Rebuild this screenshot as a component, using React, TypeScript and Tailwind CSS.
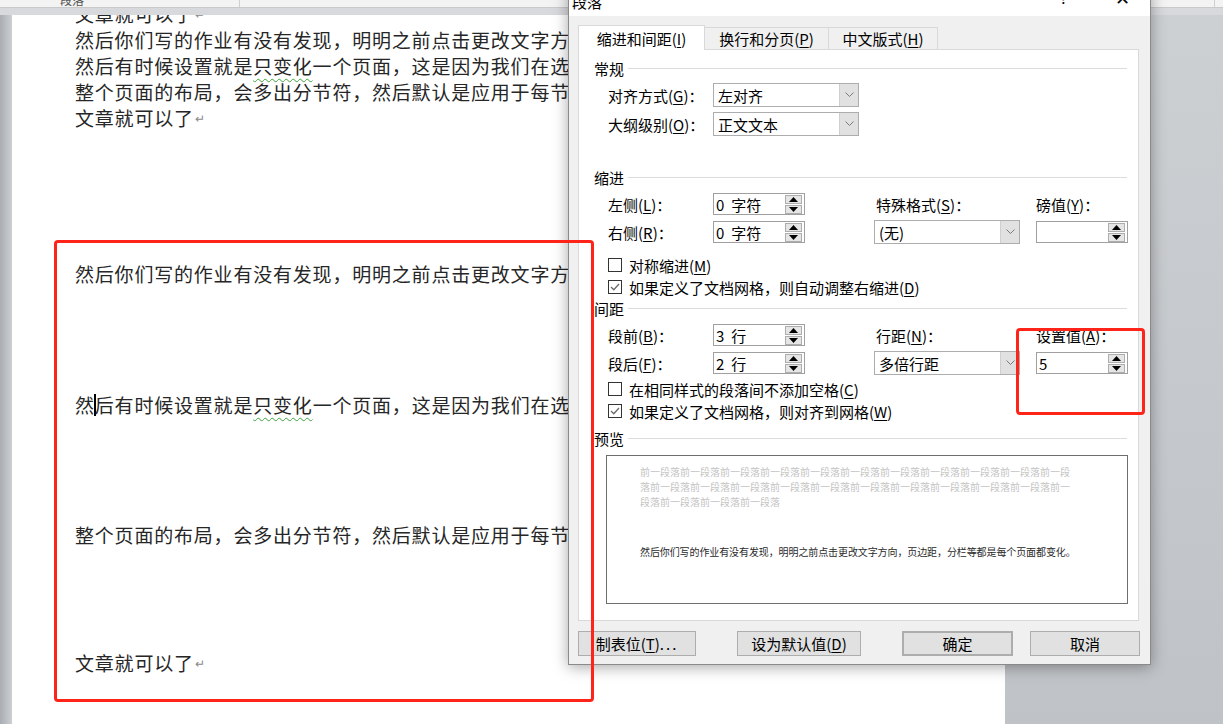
import React from "react";

const M = ({ c }: { c: string }) => (
  <>
    (<span className="underline underline-offset-[2px] decoration-[1px]">{c}</span>)
  </>
);

const Chevron = () => (
  <svg width="9" height="6" viewBox="0 0 9 6">
    <path d="M0.5 0.5 L4.5 4.5 L8.5 0.5" fill="none" stroke="#7a7a7a" strokeWidth="1" />
  </svg>
);

const Select = ({ value }: { value: string }) => (
  <div className="flex h-[24px] w-[146px] shrink-0 border border-[#adadad] bg-white">
    <div className="flex flex-1 items-center pl-[4px] text-[15px] leading-none">{value}</div>
    <div className="flex w-[19px] items-center justify-center border-l border-[#cfcfcf] bg-[#e1e1e1]">
      <Chevron />
    </div>
  </div>
);

const SpinBtn = ({ up }: { up: boolean }) => (
  <div className="flex h-[9px] w-[17px] items-center justify-center border border-[#adadad] bg-[#e5e5e5]">
    <svg width="9" height="5" viewBox="0 0 9 5">
      {up ? <path d="M0 5 L4.5 0 L9 5 Z" fill="#000" /> : <path d="M0 0 L4.5 5 L9 0 Z" fill="#000" />}
    </svg>
  </div>
);

const Spin = ({ num, unit }: { num: string; unit?: string }) => (
  <div className="flex h-[22px] w-[92px] shrink-0 items-center border border-[#a0a0a0] bg-white pl-[2px] pr-[2px]">
    <div className="flex flex-1 items-center text-[15px] leading-none">
      <span>{num}</span>
      {unit && <span className="ml-[7px]">{unit}</span>}
    </div>
    <div className="flex flex-col gap-[1px]">
      <SpinBtn up />
      <SpinBtn up={false} />
    </div>
  </div>
);

const Heading = ({ t, mt }: { t: string; mt: string }) => (
  <div className={`flex h-[20px] items-center pl-[15px] pr-[11px] ${mt}`}>
    <span className="leading-none">{t}</span>
    <div className="ml-[4px] h-px flex-1 bg-[#dcdcdc]" />
  </div>
);

const CheckRow = ({ checked, mt, children }: { checked: boolean; mt: string; children: React.ReactNode }) => (
  <div className={`flex h-[20px] items-center gap-[7px] pl-[29px] ${mt}`}>
    <div className="flex h-[14px] w-[14px] items-center justify-center border border-[#333333] bg-white">
      {checked && (
        <svg width="10" height="8" viewBox="0 0 10 8">
          <path d="M1 4 L3.8 6.8 L9 1" fill="none" stroke="#6a6a6a" strokeWidth="1.3" />
        </svg>
      )}
    </div>
    <span className="leading-none">{children}</span>
  </div>
);

const Label = ({ children }: { children: React.ReactNode }) => (
  <div className="w-[105px] shrink-0 whitespace-nowrap leading-none">{children}</div>
);

const Btn = ({ children, cls }: { children: React.ReactNode; cls: string }) => (
  <div className={`flex h-[25px] shrink-0 items-center justify-center border border-[#adadad] bg-[#e1e1e1] leading-none ${cls}`}>
    {children}
  </div>
);

const Wavy = ({ children }: { children: React.ReactNode }) => (
  <span className="underline decoration-wavy decoration-[#3aa63a] decoration-[1px] underline-offset-[4px]">{children}</span>
);

const Ret = () => <span className="ml-[1px] align-[-2px] text-[12px] text-[#8a8a8a]">↵</span>;

export default function App() {
  const docFont = "font-['Noto_Sans_CJK_SC','Noto_Sans',sans-serif]";
  return (
    <div className={`relative h-[724px] w-[1223px] overflow-hidden bg-[#c4c7cb] ${docFont}`}>
      {/* background: ribbon strip + page */}
      <div className="flex h-full flex-col">
        <div className="flex h-[8px] shrink-0 overflow-hidden border-b border-[#c9c9c9] bg-[#f3f3f3]">
          <div className="-mt-[6px] w-[240px] border-r border-[#cfcfcf] pl-[60px] text-[12px] leading-none text-[#555]">段落</div>
          <div className="flex-1" />
          <div className="w-[9px] border-l border-[#cfcfcf]" />
        </div>
        <div className="h-[7px] shrink-0 bg-[#d7d9dc]" />
        <div className="flex flex-1">
          <div className="w-[12px] shrink-0 bg-gradient-to-r from-[#a9acb1] to-[#cdd0d3]" />
          <div className="w-[993px] shrink-0 overflow-hidden bg-white pl-[63px] text-[19px] tracking-[0.8px] text-[#262626]">
            <div className="-mt-[14px] flex flex-col">
              <div className="flex h-[26px] items-center whitespace-nowrap">文章就可以了<Ret /></div>
              <div className="flex h-[26px] items-center whitespace-nowrap">然后你们写的作业有没有发现，明明之前点击更改文字方向，页边距，分栏等都是每个页面都变化。</div>
              <div className="flex h-[26px] items-center whitespace-nowrap">然后有时候设置就是<Wavy>只变化</Wavy>一个页面，这是因为我们在选择的时候选择了本节。</div>
              <div className="flex h-[26px] items-center whitespace-nowrap">整个页面的布局，会多出分节符，然后默认是应用于每节，选择整篇</div>
              <div className="flex h-[26px] items-center whitespace-nowrap">文章就可以了<Ret /></div>
              <div className="mt-[130px] flex h-[26px] items-center whitespace-nowrap">然后你们写的作业有没有发现，明明之前点击更改文字方向，页边距，分栏等都是每个页面都变化。</div>
              <div className="mt-[105px] flex h-[26px] items-center whitespace-nowrap">
                然<span className="mx-[-1px] inline-block h-[22px] w-[2px] bg-black" />后有时候设置就是<Wavy>只变化</Wavy>一个页面，这是因为我们在选择的时候选择了本节。
              </div>
              <div className="mt-[104px] flex h-[26px] items-center whitespace-nowrap">整个页面的布局，会多出分节符，然后默认是应用于每节，选择整篇</div>
              <div className="mt-[102px] flex h-[26px] items-center whitespace-nowrap">文章就可以了<Ret /></div>
            </div>
          </div>
          <div className="flex-1 bg-gradient-to-b from-[#cdd0d3] to-[#bfc2c6]" />
        </div>
      </div>

      {/* dialog */}
      <div className="absolute left-[568px] top-[-14px] flex h-[679px] w-[583px] flex-col border border-[#8a8a8a] bg-[#f0f0f0] text-[15px] text-black shadow-[0_2px_14px_rgba(0,0,0,0.35)]">
        <div className="flex h-[29px] shrink-0 items-center bg-white">
          <span className="pl-[3px] leading-none">段落</span>
          <span className="-mt-[8px] ml-auto mr-[48px] leading-none">?</span>
          <span className="-mt-[10px] mr-[20px] text-[18px] leading-none">✕</span>
        </div>
        <div className="flex shrink-0 items-end pl-[9px] pt-[9px]">
          <div className="relative z-10 -mb-px flex h-[25px] w-[127px] items-center justify-center border border-b-0 border-[#d9d9d9] bg-white leading-none">
            缩进和间距<M c="I" />
          </div>
          <div className="flex h-[22px] w-[124px] items-center justify-center border border-b-0 border-l-0 border-[#d9d9d9] bg-[#f0f0f0] leading-none">
            换行和分页<M c="P" />
          </div>
          <div className="flex h-[22px] w-[109px] items-center justify-center border border-b-0 border-l-0 border-[#d9d9d9] bg-[#f0f0f0] leading-none">
            中文版式<M c="H" />
          </div>
        </div>
        <div className="ml-[9px] flex h-[572px] w-[561px] shrink-0 flex-col border border-[#d9d9d9] bg-white">
          <Heading t="常规" mt="mt-[8px]" />
          <div className="mt-[5px] flex h-[24px] items-center pl-[29px]">
            <Label>对齐方式<M c="G" />：</Label>
            <Select value="左对齐" />
          </div>
          <div className="mt-[5px] flex h-[24px] items-center pl-[29px]">
            <Label>大纲级别<M c="O" />：</Label>
            <Select value="正文文本" />
          </div>

          <Heading t="缩进" mt="mt-[31px]" />
          <div className="mt-[6px] flex h-[22px] items-center pl-[29px]">
            <Label>左侧<M c="L" />：</Label>
            <Spin num="0" unit="字符" />
            <div className="ml-[69px] w-[162px] shrink-0 pl-[2px] leading-none">特殊格式<M c="S" />：</div>
            <div className="leading-none">磅值<M c="Y" />：</div>
          </div>
          <div className="mt-[5px] flex h-[24px] items-center pl-[29px]">
            <Label>右侧<M c="R" />：</Label>
            <Spin num="0" unit="字符" />
            <div className="ml-[69px]">
              <Select value="(无)" />
            </div>
            <div className="ml-[16px]">
              <Spin num="" />
            </div>
          </div>
          <CheckRow checked={false} mt="mt-[11px]">
            对称缩进<M c="M" />
          </CheckRow>
          <CheckRow checked mt="mt-[2px]">
            如果定义了文档网格，则自动调整右缩进<M c="D" />
          </CheckRow>

          <Heading t="间距" mt="mt-[1px]" />
          <div className="mt-[6px] flex h-[22px] items-center pl-[29px]">
            <Label>段前<M c="B" />：</Label>
            <Spin num="3" unit="行" />
            <div className="ml-[69px] w-[162px] shrink-0 pl-[2px] leading-none">行距<M c="N" />：</div>
            <div className="leading-none">设置值<M c="A" />：</div>
          </div>
          <div className="mt-[5px] flex h-[24px] items-center pl-[29px]">
            <Label>段后<M c="F" />：</Label>
            <Spin num="2" unit="行" />
            <div className="ml-[69px]">
              <Select value="多倍行距" />
            </div>
            <div className="ml-[16px]">
              <Spin num="5" />
            </div>
          </div>
          <CheckRow checked={false} mt="mt-[4px]">
            在相同样式的段落间不添加空格<M c="C" />
          </CheckRow>
          <CheckRow checked mt="mt-[2px]">
            如果定义了文档网格，则对齐到网格<M c="W" />
          </CheckRow>

          <Heading t="预览" mt="mt-[7px]" />
          <div className="ml-[27px] mt-[7px] flex h-[149px] w-[522px] flex-col border border-[#6e6e6e] bg-white pl-[33px] pt-[8px]">
            <div className="text-[10px] leading-[15px] text-[#c4c4c4]">
              <div className="whitespace-nowrap">前一段落前一段落前一段落前一段落前一段落前一段落前一段落前一段落前一段落前一段落前一段</div>
              <div className="whitespace-nowrap">落前一段落前一段落前一段落前一段落前一段落前一段落前一段落前一段落前一段落前一段落前一</div>
              <div className="whitespace-nowrap">段落前一段落前一段落前一段落</div>
            </div>
            <div className="mt-[35px] whitespace-nowrap text-[10px] leading-[15px] tracking-[-0.1px] text-[#2a2a2a]">
              然后你们写的作业有没有发现，明明之前点击更改文字方向，页边距，分栏等都是每个页面都变化。
            </div>
          </div>
        </div>
        <div className="ml-[9px] mt-[10px] flex">
          <Btn cls="w-[118px]">
            制表位<M c="T" /><span className="tracking-[2px]">...</span>
          </Btn>
          <Btn cls="ml-[41px] w-[124px]">
            设为默认值<M c="D" />
          </Btn>
          <Btn cls="ml-[41px] w-[111px] border-2 border-[#0078d7]">确定</Btn>
          <Btn cls="ml-[17px] w-[110px]">取消</Btn>
        </div>
      </div>

      {/* red annotation boxes */}
      <div className="absolute left-[54px] top-[240px] h-[462px] w-[540px] rounded-[4px] border-[3px] border-[#ff2419]" />
      <div className="absolute left-[1016px] top-[328px] h-[87px] w-[129px] rounded-[4px] border-[3px] border-[#ff2419]" />
    </div>
  );
}
